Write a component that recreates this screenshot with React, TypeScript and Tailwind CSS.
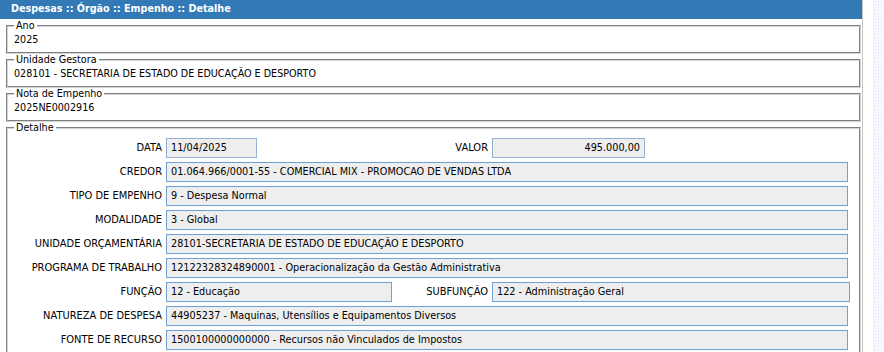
import React from 'react';

const font = "font-['DejaVu_Sans',Verdana,sans-serif]";

function Box({ legend, value }: { legend: string; value: string }) {
  return (
    <fieldset className="ml-[6px] w-[855px] border-2 border-[#d4d4d4] [border-style:groove] px-[6px] pt-[2px] pb-[6px]">
      <legend className="px-[2px] text-[9.6px] leading-[12px] text-[#000]">{legend}</legend>
      <div className="text-[9.6px] leading-[12px] text-[#000]">{value}</div>
    </fieldset>
  );
}

function Label({ text, w }: { text: string; w: string }) {
  return <div className={`${w} shrink-0 text-right text-[9.9px] text-[#000]`}>{text}</div>;
}

function Input({ value, w, right, muted }: { value: string; w: string; right?: boolean; muted?: boolean }) {
  return (
    <div
      className={`${w} ml-[4px] h-[20px] shrink-0 flex items-center px-[4px] bg-[#eeeeee] border text-[9.7px] text-[#000] whitespace-nowrap overflow-hidden ${
        muted ? 'border-[#93b1d2]' : 'border-[#6f9fd3]'
      } ${right ? 'justify-end' : ''}`}
    >
      {value}
    </div>
  );
}

function Row({ label, value }: { label: string; value: string }) {
  return (
    <div className="flex items-center h-[20px]">
      <Label text={label} w="w-[148px]" />
      <Input value={value} w="w-[682px]" />
    </div>
  );
}

export default function App() {
  return (
    <div className={`${font} flex h-[352px] w-[884px] overflow-hidden bg-white`}>
      <div className="w-[863px] shrink-0 border-r border-[#c6c6c6]">
        <div className="h-[19px] bg-[#3379b5] pl-[11px] flex items-center text-[9.6px] font-bold text-white">
          Despesas :: Órgão :: Empenho :: Detalhe
        </div>
        <div className="pt-[1px]">
          <Box legend="Ano" value="2025" />
          <Box legend="Unidade Gestora" value="028101 - SECRETARIA DE ESTADO DE EDUCAÇÃO E DESPORTO" />
          <Box legend="Nota de Empenho" value="2025NE0002916" />
          <fieldset className="ml-[6px] w-[855px] h-[400px] border-2 border-[#d4d4d4] [border-style:groove] px-[6px] pt-[4px]">
            <legend className="px-[2px] text-[9.6px] leading-[12px] text-[#000]">Detalhe</legend>
            <div className="flex flex-col gap-[4px]">
              <div className="flex items-center h-[20px]">
                <Label text="DATA" w="w-[148px]" />
                <Input value="11/04/2025" w="w-[91px]" muted />
                <Label text="VALOR" w="w-[231px]" />
                <Input value="495.000,00" w="w-[153px]" right muted />
              </div>
              <Row label="CREDOR" value="01.064.966/0001-55 - COMERCIAL MIX - PROMOCAO DE VENDAS LTDA" />
              <Row label="TIPO DE EMPENHO" value="9 - Despesa Normal" />
              <Row label="MODALIDADE" value="3 - Global" />
              <Row label="UNIDADE ORÇAMENTÁRIA" value="28101-SECRETARIA DE ESTADO DE EDUCAÇÃO E DESPORTO" />
              <Row label="PROGRAMA DE TRABALHO" value="12122328324890001 - Operacionalização da Gestão Administrativa" />
              <div className="flex items-center h-[20px]">
                <Label text="FUNÇÃO" w="w-[148px]" />
                <Input value="12 - Educação" w="w-[226px]" />
                <Label text="SUBFUNÇÃO" w="w-[96px]" />
                <Input value="122 - Administração Geral" w="w-[358px]" />
              </div>
              <Row label="NATUREZA DE DESPESA" value="44905237 - Maquinas, Utensílios e Equipamentos Diversos" />
              <Row label="FONTE DE RECURSO" value="1500100000000000 - Recursos não Vinculados de Impostos" />
            </div>
          </fieldset>
        </div>
      </div>
      <div className="w-[10px] shrink-0" />
      <div className="flex-1 border-l border-[#eef2f7] bg-[#f7f9fc] bg-[radial-gradient(#d3e0ef_1px,transparent_1px)] bg-[length:3px_3px]" />
    </div>
  );
}
